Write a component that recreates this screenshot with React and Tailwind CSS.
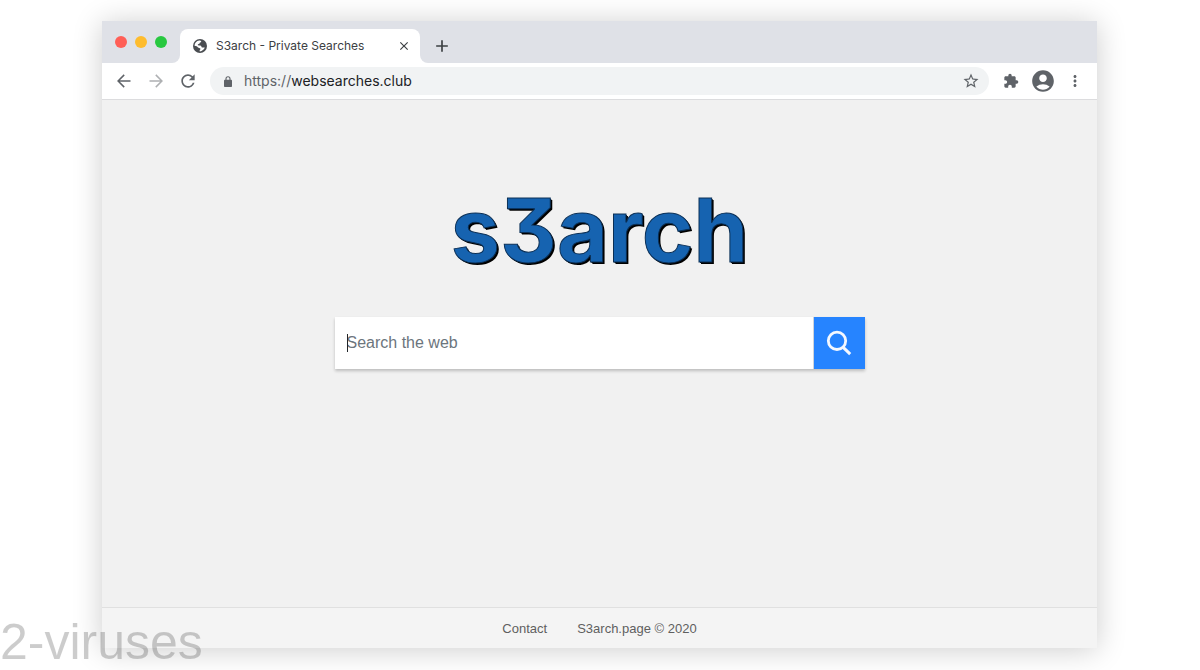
import React, { useState } from 'react';
import {
  MdAccountCircle,
  MdAdd,
  MdClose,
  MdExtension,
  MdMoreVert,
  MdRefresh,
  MdStarBorder,
} from 'react-icons/md';

const ToolbarButton = ({ label, className = '', children }) => (
  <button
    type="button"
    aria-label={label}
    className={`flex h-7 w-8 shrink-0 items-center justify-center text-[#5f6368] ${className}`}
  >
    {children}
  </button>
);

const ArrowIcon = ({ className = '' }) => (
  <svg width="14" height="14" viewBox="0 0 14 14" className={className} fill="none" stroke="currentColor" strokeWidth="1.5">
    <path d="M13.5 7H1.500M7.200 0.900L1.100 7l6.100 6.100" />
  </svg>
);

const GlobeIcon = () => (
  <svg width="14" height="14" viewBox="0 0 28 28" className="shrink-0">
    <circle cx="14" cy="14" r="14" fill="#4a4d51" />
    <path
      d="M3 13.5C3.2 8.5 7 3.8 12.5 3.2c2 0 3.5.8 4 1.8-.3 1.4-1.6 1.7-2.5 2.2-.8.6-.5 1.9-1.5 2.5-1 .7-2.2.6-2.8 1.5-.4.9.3 1.8 1.5 1.9 1.8.1 3.8-.3 5 .9 1.1 1.1.5 2.3 1.8 2.800 1.600.5 3.800-.2 5.600.2-1.500 4-5.200 7.300-9.600 7.800-1-.3-1-1.900-.3-2.800.8-1 1.600-2 .9-3-1-1.400-3.200-1-4.600-2.200C8.7 15.2 6.5 13.7 3 13.5z"
      fill="#fff"
    />
  </svg>
);

const LockIcon = () => (
  <svg width="8" height="11" viewBox="0 0 8 11" className="mx-0.5 shrink-0">
    <rect y="3.8" width="8" height="7.2" rx="0.8" fill="#5f6368" />
    <path d="M2 4.2V2.7a2 2 0 0 1 4 0v1.5" fill="none" stroke="#5f6368" strokeWidth="1.1" />
  </svg>
);

const TabStrip = () => (
  <div className="bg-[#dfe1e7] pt-2">
    <div className="flex h-[34px] bg-white">
      {/* Window controls */}
      <div className="flex w-[78px] shrink-0 items-center gap-2 rounded-br-lg bg-[#dfe1e7] pb-2 pl-[13px]">
        <button type="button" aria-label="Close window" className="size-3 rounded-full bg-[#ff5f57]" />
        <button type="button" aria-label="Minimize window" className="size-3 rounded-full bg-[#febc2e]" />
        <button type="button" aria-label="Zoom window" className="size-3 rounded-full bg-[#28c840]" />
      </div>

      {/* Active tab */}
      <div className="w-60 shrink-0 bg-[#dfe1e7]">
        <div className="flex h-[34px] items-center rounded-t-lg bg-white pl-[13px] pr-[9px]">
          <GlobeIcon />
          <span className="ml-[9px] grow text-xs text-[#3c4043]">S3arch - Private Searches</span>
          <button type="button" aria-label="Close tab" className="text-[#3c4043]">
            <MdClose size={14} />
          </button>
        </div>
      </div>

      <div className="flex grow items-center rounded-bl-lg bg-[#dfe1e7] pl-3">
        <button type="button" aria-label="New tab" className="text-[#3c4043]">
          <MdAdd size={20} />
        </button>
      </div>
    </div>
  </div>
);

const Toolbar = () => {
  const [host, setHost] = useState('websearches.club');

  return (
    <div className="flex items-center border-b border-[#dcdcde] bg-white px-1.5 py-1">
      <ToolbarButton label="Back">
        <ArrowIcon />
      </ToolbarButton>
      <ToolbarButton label="Forward" className="opacity-50">
        <ArrowIcon className="rotate-180" />
      </ToolbarButton>
      <ToolbarButton label="Reload">
        <MdRefresh size={20} />
      </ToolbarButton>

      <div className="mx-1.5 flex h-7 min-w-0 grow items-center rounded-full bg-[#f1f3f4] pl-3 pr-0.5 text-sm">
        <LockIcon />
        <label htmlFor="address" className="ml-2.5 text-[#5f6368]">https://</label>
        <input
          id="address"
          type="text"
          value={host}
          onChange={(e) => setHost(e.target.value)}
          className="min-w-0 grow bg-transparent text-[#202124] outline-none"
        />
        <ToolbarButton label="Bookmark this page">
          <MdStarBorder size={18} />
        </ToolbarButton>
      </div>

      <ToolbarButton label="Extensions">
        <MdExtension size={16} />
      </ToolbarButton>
      <ToolbarButton label="Profile">
        <MdAccountCircle size={26} />
      </ToolbarButton>
      <ToolbarButton label="Menu">
        <MdMoreVert size={18} />
      </ToolbarButton>
    </div>
  );
};

const SearchForm = () => {
  const [query, setQuery] = useState('');

  return (
    <form
      onSubmit={(e) => e.preventDefault()}
      className="flex h-[52px] w-full max-w-[530px] shadow-[0_2px_3px_rgba(0,0,0,0.22)]"
    >
      <div className="relative min-w-0 grow border-r border-[#cdd3dc] bg-white">
        <input
          type="text"
          aria-label="Search the web"
          placeholder="Search the web"
          value={query}
          onChange={(e) => setQuery(e.target.value)}
          className="h-full w-full px-3 text-base text-[#495057] caret-transparent outline-none placeholder:text-[#6c757d]"
        />
        {/* Text cursor */}
        <span className="pointer-events-none absolute left-3 top-[17px] h-[18px] w-px bg-[#212529]" />
      </div>
      <button type="submit" aria-label="Search" className="flex w-[51px] shrink-0 items-center justify-center bg-[#2684ff]">
        <svg width="26" height="26" viewBox="0 0 26 26" fill="none" stroke="#f4f8ff" strokeWidth="2.8">
          <circle cx="11" cy="10.8" r="8.7" />
          <path d="M17.2 17.4l7 6.8" strokeWidth="3" />
        </svg>
      </button>
    </form>
  );
};

const App = () => (
  <div className="relative flex min-h-screen flex-col bg-white pb-[22px] pl-[102px] pr-[103px] pt-[21px]">
    <div className="flex grow flex-col bg-[#f1f1f1] shadow-[0_2px_28px_rgba(0,0,0,0.2)]">
      <header className="font-['Inter',sans-serif]">
        <TabStrip />
        <Toolbar />
      </header>

      <main className="flex grow flex-col items-center px-6 pt-20 font-['Liberation_Sans',Arial,sans-serif]">
        <h1 className="mb-[37px] font-['Inter',sans-serif] text-[88px] font-bold leading-[100px] text-[#1663b0] [font-feature-settings:'cv09'] [-webkit-text-stroke:1px_#0b2f55] [text-shadow:1px_1px_0_#000,2px_2px_0_#000]">
          s3arch
        </h1>
        <SearchForm />
      </main>

      <footer className="flex h-[41px] items-center justify-center gap-[30px] border-t border-[#e0e0e0] bg-[#f4f4f4] pt-px font-['Liberation_Sans',Arial,sans-serif] text-[13px] text-[#5f5f5f]">
        <a href="#contact">Contact</a>
        <span>S3arch.page © 2020</span>
      </footer>
    </div>

    {/* Watermark */}
    <div className="pointer-events-none absolute bottom-[3px] left-0 font-['Liberation_Sans',Arial,sans-serif] text-[50px] leading-[50px] text-black/20">
      2-viruses
    </div>
  </div>
);

export default App;
